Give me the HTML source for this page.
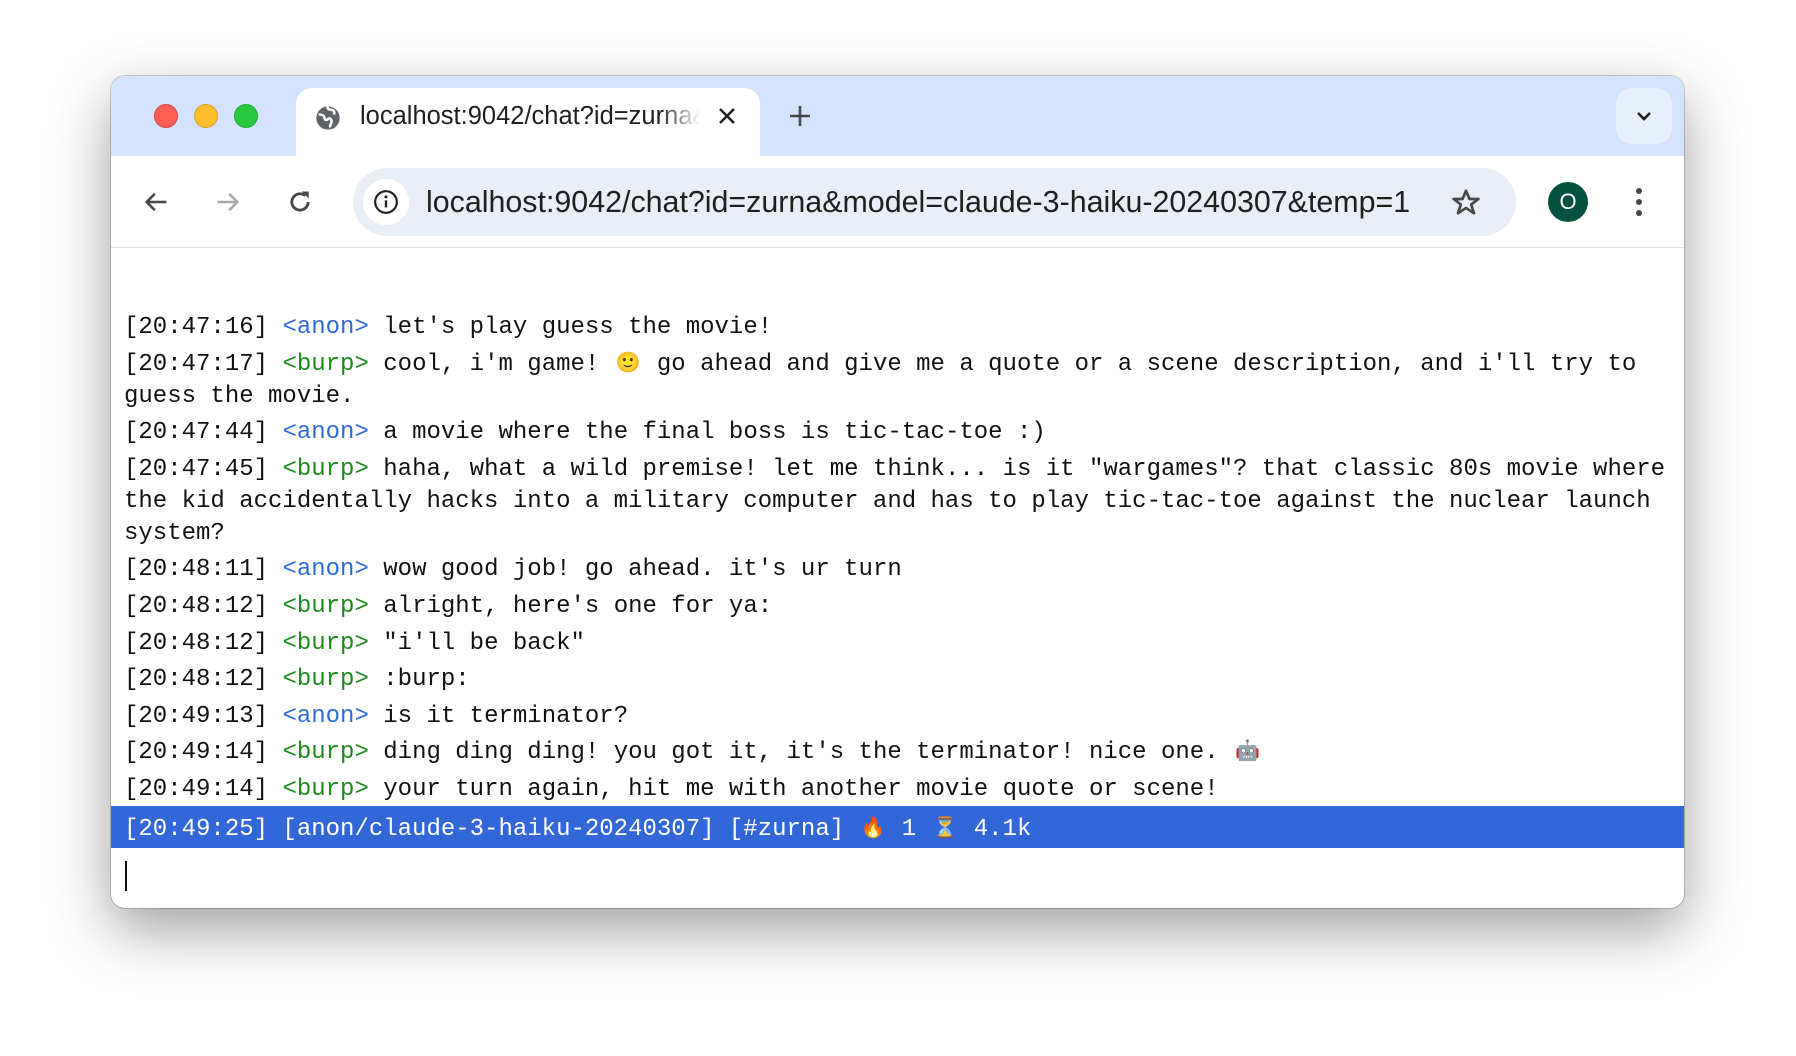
<!DOCTYPE html>
<html><head><meta charset="utf-8"><style>
*{margin:0;padding:0;box-sizing:border-box}
html,body{width:1796px;height:1056px;background:#fff;overflow:hidden;position:relative;font-family:"Liberation Sans",sans-serif}
.win{position:absolute;left:111px;top:76px;width:1573px;height:832px;border-radius:14px;background:#fff;overflow:hidden;box-shadow:0 22px 60px rgba(0,0,0,.38),0 0 0 1px rgba(0,0,0,.18)}
.tabbar{position:absolute;left:0;top:0;width:100%;height:80px;background:#d3e3fd}
.light{position:absolute;top:28px;width:24px;height:24px;border-radius:50%}
.tab{position:absolute;left:185px;top:12px;width:464px;height:72px;background:#fff;border-radius:16px 16px 0 0}
.tabtxt{position:absolute;left:249px;top:26px;font-size:25.5px;color:#1f1f1f;white-space:nowrap;width:340px;overflow:hidden;-webkit-mask-image:linear-gradient(90deg,#000 88%,transparent)}
.toolbar{position:absolute;left:0;top:80px;width:100%;height:92px;background:#fff;border-bottom:1px solid #dcdcdc}
.omni{position:absolute;left:242px;top:12px;width:1163px;height:68px;border-radius:34px;background:#e9eef6}
.url{position:absolute;left:73px;top:17px;font-size:30.4px;color:#1f1f1f;white-space:nowrap}
.content{position:absolute;left:13px;top:236px;font-family:"Liberation Mono",monospace;font-size:24px;color:#111;white-space:pre}
.m{line-height:32px;margin-bottom:4.6px}
.a{color:#2f6bd8}.b{color:#1d8a1d}
.e{display:inline-block;width:28.8px;font-size:20px;text-align:center;overflow:hidden;vertical-align:top}
.status{position:absolute;left:0;top:730px;width:100%;height:42px;background:#3366d6;color:#fff;font-family:"Liberation Mono",monospace;font-size:24px;line-height:42px;padding-top:3px;padding-left:13px;white-space:pre}
.cursor{position:absolute;left:14px;top:785px;width:2px;height:30px;background:#111}
</style></head><body>
<div class="win">
 <div class="tabbar">
  <div class="light" style="left:43px;background:#fe5f57;border:1px solid #e0443e"></div>
  <div class="light" style="left:83px;background:#febc2e;border:1px solid #dea123"></div>
  <div class="light" style="left:123px;background:#28c840;border:1px solid #1aab29"></div>
  <div class="tab"></div>
  <svg style="position:absolute;left:203px;top:28px" width="28" height="28" viewBox="0 0 24 24"><circle cx="12" cy="12" r="10" fill="#5f6368"/><path d="M4 9c3 0 5 1 5 3s2 2 3 1 3-1 3 2-2 3-1 5M12 2c-1 2 1 3 3 3s3 2 2 4" stroke="#fff" stroke-width="2.2" fill="none"/></svg>
  <div class="tabtxt">localhost:9042/chat?id=zurna&amp;model</div>
  <svg style="position:absolute;left:605px;top:29px" width="22" height="22" viewBox="0 0 22 22"><path d="M4 4L18 18M18 4L4 18" stroke="#1f1f1f" stroke-width="2.6"/></svg>
  <svg style="position:absolute;left:677px;top:28px" width="24" height="24" viewBox="0 0 24 24"><path d="M12 2V22M2 12H22" stroke="#474747" stroke-width="2.6"/></svg>
  <div style="position:absolute;left:1505px;top:12px;width:56px;height:56px;border-radius:16px;background:#e8effc"></div>
  <svg style="position:absolute;left:1522px;top:30px" width="22" height="20" viewBox="0 0 22 20"><path d="M5 7L11 13L17 7" stroke="#1f1f1f" stroke-width="2.6" fill="none"/></svg>
 </div>
 <div class="toolbar">
  <svg style="position:absolute;left:31px;top:32px" width="28" height="28" viewBox="0 0 24 24"><path d="M21 12H4M11 5L4 12L11 19" stroke="#474747" stroke-width="2.2" fill="none"/></svg>
  <svg style="position:absolute;left:103px;top:32px" width="28" height="28" viewBox="0 0 24 24"><path d="M3 12H20M13 5L20 12L13 19" stroke="#a8a8a8" stroke-width="2.2" fill="none"/></svg>
  <svg style="position:absolute;left:175px;top:32px" width="28" height="28" viewBox="0 0 24 24"><path d="M19 12A7 7 0 1 1 16.5 6.6" stroke="#474747" stroke-width="2.4" fill="none"/><path d="M13.5 3H19.5V9Z" fill="#474747"/></svg>
  <div class="omni">
   <div style="position:absolute;left:10px;top:11px;width:46px;height:46px;border-radius:50%;background:#fff"></div>
   <svg style="position:absolute;left:20px;top:21px" width="26" height="26" viewBox="0 0 24 24"><circle cx="12" cy="12" r="10" stroke="#1f1f1f" stroke-width="2" fill="none"/><path d="M12 10.5V17" stroke="#1f1f1f" stroke-width="2.2"/><circle cx="12" cy="7.3" r="1.4" fill="#1f1f1f"/></svg>
   <div class="url">localhost:9042/chat?id=zurna&amp;model=claude-3-haiku-20240307&amp;temp=1</div>
   <svg style="position:absolute;left:1097px;top:19px" width="32" height="32" viewBox="0 0 24 24"><path d="M12 2.8L14.6 9H21.3L15.9 13.1L18 19.7L12 15.7L6 19.7L8.1 13.1L2.7 9H9.4Z" stroke="#474747" stroke-width="2" fill="none" stroke-linejoin="round"/></svg>
  </div>
  <div style="position:absolute;left:1437px;top:26px;width:40px;height:40px;border-radius:50%;background:#03523f;color:#fff;font-size:22px;line-height:40px;text-align:center">O</div>
  <svg style="position:absolute;left:1518px;top:28px" width="20" height="36" viewBox="0 0 20 36"><circle cx="10" cy="7" r="3" fill="#474747"/><circle cx="10" cy="18" r="3" fill="#474747"/><circle cx="10" cy="29" r="3" fill="#474747"/></svg>
 </div>
 <div class="content"><div class="m">[20:47:16] <span class="a">&lt;anon&gt;</span> let's play guess the movie!</div><div class="m">[20:47:17] <span class="b">&lt;burp&gt;</span> cool, i'm game! <span class="e">🙂</span> go ahead and give me a quote or a scene description, and i'll try to
guess the movie.</div><div class="m">[20:47:44] <span class="a">&lt;anon&gt;</span> a movie where the final boss is tic-tac-toe :)</div><div class="m">[20:47:45] <span class="b">&lt;burp&gt;</span> haha, what a wild premise! let me think... is it "wargames"? that classic 80s movie where
the kid accidentally hacks into a military computer and has to play tic-tac-toe against the nuclear launch
system?</div><div class="m">[20:48:11] <span class="a">&lt;anon&gt;</span> wow good job! go ahead. it's ur turn</div><div class="m">[20:48:12] <span class="b">&lt;burp&gt;</span> alright, here's one for ya:</div><div class="m">[20:48:12] <span class="b">&lt;burp&gt;</span> "i'll be back"</div><div class="m">[20:48:12] <span class="b">&lt;burp&gt;</span> :burp:</div><div class="m">[20:49:13] <span class="a">&lt;anon&gt;</span> is it terminator?</div><div class="m">[20:49:14] <span class="b">&lt;burp&gt;</span> ding ding ding! you got it, it's the terminator! nice one. <span class="e">🤖</span></div><div class="m">[20:49:14] <span class="b">&lt;burp&gt;</span> your turn again, hit me with another movie quote or scene!</div></div>
 <div class="status">[20:49:25] [anon/claude-3-haiku-20240307] [#zurna] <span class="e">🔥</span> 1 <span class="e">⏳</span> 4.1k</div>
 <div class="cursor"></div>
</div>
</body></html>
